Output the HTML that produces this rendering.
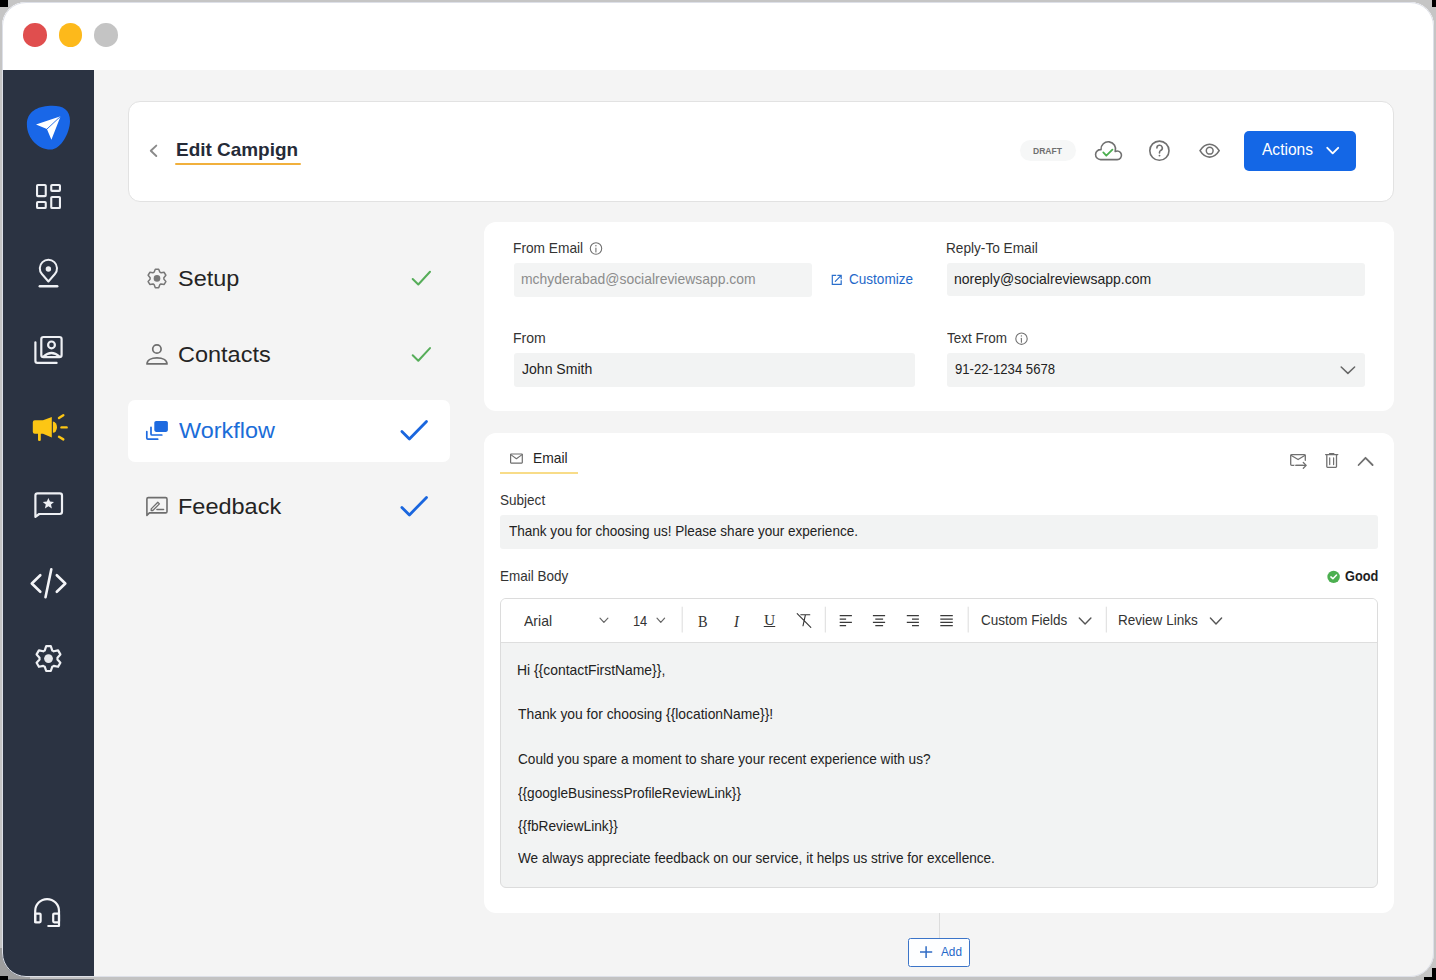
<!DOCTYPE html>
<html><head><meta charset="utf-8">
<style>
html,body{margin:0;padding:0;}
body{width:1436px;height:980px;position:relative;overflow:hidden;background:#c5c5c5;font-family:"Liberation Sans",sans-serif;}
.abs{position:absolute;}
.t{position:absolute;white-space:nowrap;transform-origin:0 0;}
#win{position:absolute;left:2px;top:2px;width:1432px;height:975px;border-radius:24px;overflow:hidden;background:#f4f4f4;}
</style></head><body>
<div class="abs" style="left:0;top:0;width:8px;height:7px;background:#000"></div>
<div class="abs" style="left:1432px;top:0;width:4px;height:7px;background:#000"></div>
<div class="abs" style="left:0;top:977px;width:1436px;height:3px;background:#c2c2c2"></div>
<div class="abs" style="left:0;top:948px;width:30px;height:32px;background:#9e9e9e"></div>
<div class="abs" style="left:8px;top:978.5px;width:86px;height:1.5px;background:#70747c"></div>
<div class="abs" style="left:0;top:976px;width:8px;height:4px;background:#000"></div>
<div class="abs" style="left:1424px;top:977px;width:12px;height:3px;background:#000"></div>
<div class="abs" style="left:1432px;top:968px;width:4px;height:12px;background:#000"></div>
<div id="win">
 <div class="abs" style="left:0;top:0;width:1432px;height:68px;background:#fff"></div>
 <div class="abs" style="left:0;top:68px;width:92px;height:907px;background:#2b3342"></div>
</div>
<!-- traffic lights -->
<div class="abs" style="left:23.3px;top:23.3px;width:23.5px;height:23.5px;border-radius:50%;background:#e04e4e"></div>
<div class="abs" style="left:58.7px;top:23.3px;width:23.5px;height:23.5px;border-radius:50%;background:#fdb91b"></div>
<div class="abs" style="left:94.2px;top:23.3px;width:23.5px;height:23.5px;border-radius:50%;background:#c4c4c4"></div>
<!-- header card -->
<div class="abs" style="left:127.5px;top:101.2px;width:1266px;height:100.5px;box-sizing:border-box;border:1.8px solid #e2e2e2;border-radius:12px;background:#fff"></div>
<div class="abs" style="left:175px;top:162.8px;width:126px;height:2.6px;background:#f1b03c;border-radius:1px"></div>
<div class="abs" style="left:1020px;top:139.6px;width:56px;height:21.8px;border-radius:11px;background:#f6f7f7"></div>
<div class="abs" style="left:1243.5px;top:131px;width:112.5px;height:39.7px;border-radius:5px;background:#1467e6"></div>
<!-- workflow highlight -->
<div class="abs" style="left:128.2px;top:400.2px;width:321.5px;height:61.4px;border-radius:7px;background:#fff"></div>
<!-- form card -->
<div class="abs" style="left:484px;top:221.8px;width:910px;height:189.2px;border-radius:12px;background:#fff"></div>
<div class="abs" style="left:513.5px;top:262.8px;width:298.5px;height:34px;border-radius:3px;background:#f3f4f4"></div>
<div class="abs" style="left:513.5px;top:353px;width:401.5px;height:33.8px;border-radius:3px;background:#f2f3f3"></div>
<div class="abs" style="left:946.8px;top:262.8px;width:418px;height:33.6px;border-radius:3px;background:#f2f3f3"></div>
<div class="abs" style="left:946.8px;top:353px;width:418px;height:34px;border-radius:3px;background:#f2f3f3"></div>
<!-- email card -->
<div class="abs" style="left:484px;top:432.8px;width:910px;height:480px;border-radius:12px;background:#fff"></div>
<div class="abs" style="left:500px;top:471.5px;width:77.7px;height:2.6px;background:#f8dc88"></div>
<div class="abs" style="left:500px;top:514.8px;width:878px;height:34px;border-radius:3px;background:#f2f3f3"></div>
<div class="abs" style="left:500px;top:597.8px;width:877.5px;height:290.2px;box-sizing:border-box;border:1px solid #dcdcdc;border-radius:6px;background:#f2f3f3;overflow:hidden">
  <div class="abs" style="left:0;top:0;width:100%;height:43.6px;background:#fff;border-bottom:1px solid #dedede"></div>
</div>
<div class="abs" style="left:938.7px;top:913px;width:1px;height:25px;background:#dcdcdc"></div>
<div class="abs" style="left:908.3px;top:938.2px;width:61.5px;height:28.5px;box-sizing:border-box;border:1.3px solid #3b74c8;border-radius:2.5px;background:#fdfeff"></div>
<svg class="abs" style="left:0;top:0" width="1436" height="980" viewBox="0 0 1436 980" fill="none" stroke-linecap="round" stroke-linejoin="round">
<!-- logo blob -->
<path d="M50,105.8 C62,105.2 70.2,109 70,121 C69.8,133 61,149.5 50.5,149.6 C39,149.7 27,139 26.9,124.5 C26.8,112 37,106.4 50,105.8 Z" fill="#1967e8"/>
<path d="M60.6,116.3 L36,124.6 L46.9,129.1 L51.4,139.7 Z" fill="#fff"/>
<path d="M60.6,116.3 L46.9,129.1" stroke="#1967e8" stroke-width="0.9"/>
<!-- dashboard -->
<g stroke="#eef0f4" stroke-width="2.1">
<rect x="37.05" y="185.05" width="8.7" height="11.1" rx="0.8"/>
<rect x="51.25" y="185.05" width="8.7" height="5.8" rx="0.8"/>
<rect x="37.05" y="201.95" width="8.7" height="6" rx="0.8"/>
<rect x="51.25" y="197.05" width="8.7" height="10.9" rx="0.8"/>
</g>
<!-- location -->
<g stroke="#eef0f4" stroke-width="2">
<path d="M48.4,281.5 L41.9,274 A8.6,8.6 0 1 1 54.9,274 Z"/>
<path d="M39.8,286.2 H57.2" stroke-width="2.5"/>
</g>
<circle cx="48.4" cy="269" r="2.7" fill="#eef0f4"/>
<!-- contacts book -->
<g stroke="#eef0f4" stroke-width="2.2">
<rect x="41.3" y="337" width="20.3" height="20.1" rx="2.2"/>
<path d="M35.4,342.3 V361 Q35.4,362.9 37.3,362.9 H56.6"/>
<circle cx="51.5" cy="344.9" r="3.4"/>
<path d="M43.5,356.5 Q51.5,349.5 59.4,356.5"/>
</g>
<!-- megaphone -->
<g fill="#fdc614">
<path d="M32.8,422.3 Q32.8,420.3 34.8,420.3 H43 L51.8,417 V437.5 L43,433.7 H34.8 Q32.8,433.7 32.8,431.7 Z"/>
<path d="M52.9,421.6 A4.1,5.6 0 0 1 52.9,432.8 Z"/>
<rect x="38" y="432" width="2.8" height="9" rx="1.2"/>
</g>
<g stroke="#fdc614" stroke-width="2.4">
<path d="M59,418 L63.3,415.2"/><path d="M61.5,427.4 H66.6"/><path d="M59,436.8 L63.3,439.4"/>
</g>
<!-- review bubble -->
<g stroke="#eef0f4" stroke-width="2.2">
<path d="M35.4,516.8 V495.5 Q35.4,493.3 37.6,493.3 H59.8 Q62,493.3 62,495.5 V511.8 Q62,514 59.8,514 H39.2 Z"/>
</g>
<path d="M48.4,497.9 L50,501.6 L54,501.9 L51,504.5 L51.9,508.4 L48.4,506.3 L44.9,508.4 L45.8,504.5 L42.8,501.9 L46.8,501.6 Z" fill="#eef0f4"/>
<!-- code -->
<g stroke="#f4f5f8" stroke-width="2.6">
<path d="M40.3,575.2 L31.8,583.5 L40.3,591.8"/>
<path d="M56.8,575.2 L65.3,583.5 L56.8,591.8"/>
<path d="M51.3,569.3 L45.5,597.2"/>
</g>
<!-- settings gear -->
<path id="gearp" d="M44.80,650.40 L46.20,646.21 L50.80,646.21 L52.20,650.40 A9.0,9.0 0 0 1 53.76,651.29 L58.08,650.41 L60.38,654.40 L57.46,657.70 A9.0,9.0 0 0 1 57.46,659.50 L60.38,662.80 L58.08,666.79 L53.76,665.91 A9.0,9.0 0 0 1 52.20,666.80 L50.80,670.99 L46.20,670.99 L44.80,666.80 A9.0,9.0 0 0 1 43.24,665.91 L38.92,666.79 L36.62,662.80 L39.54,659.50 A9.0,9.0 0 0 1 39.54,657.70 L36.62,654.40 L38.92,650.41 L43.24,651.29 A9.0,9.0 0 0 1 44.80,650.40Z" stroke="#eef0f4" stroke-width="2.2"/>
<circle cx="48.5" cy="658.6" r="4.4" fill="#e6e8ec"/>
<!-- headset -->
<g stroke="#f4f5f8" stroke-width="2.2">
<path d="M35.2,922.3 V911 A11.9,11.9 0 0 1 59,911 V925.8 Q59,926 58.8,926 H48.3"/>
<rect x="35.2" y="913.6" width="5.4" height="8.7" rx="1"/>
<rect x="53.2" y="913.6" width="5.8" height="8.7" rx="1"/>
</g>
<!-- back chevron -->
<path d="M156.3,145.6 L150.8,150.8 L156.3,156" stroke="#8a8a8a" stroke-width="1.9"/>
<!-- cloud -->
<path d="M1100.6,159.6 A5,5 0 1 1 1101.02,149.62 A7.3,7.3 0 1 1 1115.19,151.48 A4.3,4.3 0 1 1 1117.2,159.6 Z" stroke="#707070" stroke-width="1.6"/>
<path d="M1103.3,152.4 L1106.3,155.7 L1112.4,149.6" stroke="#4caf50" stroke-width="1.8"/>
<!-- help -->
<circle cx="1159.4" cy="150.7" r="9.6" stroke="#707070" stroke-width="1.6"/>
<path d="M1156.9,148 A2.7,2.7 0 1 1 1160.7,150.4 Q1159.5,151.1 1159.5,152.5 V153" stroke="#707070" stroke-width="1.6"/>
<circle cx="1159.5" cy="155.6" r="0.95" fill="#707070"/>
<!-- eye -->
<path d="M1200,150.7 C1203,145.8 1206.4,144.3 1209.6,144.3 C1212.8,144.3 1216.2,145.8 1219.2,150.7 C1216.2,155.6 1212.8,157.1 1209.6,157.1 C1206.4,157.1 1203,155.6 1200,150.7 Z" stroke="#707070" stroke-width="1.6"/>
<circle cx="1209.7" cy="150.7" r="3.4" stroke="#707070" stroke-width="1.5"/>
<!-- actions chevron -->
<path d="M1327.3,147.8 L1332.7,153.3 L1338.2,147.8" stroke="#fff" stroke-width="1.9"/>
<!-- setup gear step -->
<path d="M154.20,272.09 L155.30,269.16 L158.70,269.16 L159.80,272.09 A6.9,6.9 0 0 1 161.06,272.82 L164.16,272.31 L165.86,275.25 L163.86,277.67 A6.9,6.9 0 0 1 163.86,279.13 L165.86,281.55 L164.16,284.49 L161.06,283.98 A6.9,6.9 0 0 1 159.80,284.71 L158.70,287.64 L155.30,287.64 L154.20,284.71 A6.9,6.9 0 0 1 152.94,283.98 L149.84,284.49 L148.14,281.55 L150.14,279.13 A6.9,6.9 0 0 1 150.14,277.67 L148.14,275.25 L149.84,272.31 L152.94,272.82 A6.9,6.9 0 0 1 154.20,272.09Z" stroke="#777" stroke-width="1.5"/>
<circle cx="157" cy="278.4" r="3.3" fill="#777"/>
<!-- green checks -->
<path d="M412.7,279 L418.3,284.5 L430,271.8" stroke="#56ad59" stroke-width="2"/>
<path d="M412.7,355.3 L418.3,360.8 L430,348.1" stroke="#56ad59" stroke-width="2"/>
<!-- person -->
<circle cx="156.9" cy="349" r="4.2" stroke="#6e6e6e" stroke-width="1.7"/>
<path d="M147,363.9 H167 C167,360 162.5,357.9 157,357.9 C151.5,357.9 147,360 147,363.9 Z" stroke="#6e6e6e" stroke-width="1.7"/>
<!-- workflow icon -->
<rect x="154.3" y="421" width="13.6" height="10.9" rx="1.8" fill="#1d6ae0"/>
<path d="M151,427.3 V433.9 Q151,435 152.1,435 H161.8" stroke="#1d6ae0" stroke-width="1.7"/>
<path d="M146.8,431.5 V438.1 Q146.8,439.2 147.9,439.2 H157.7" stroke="#1d6ae0" stroke-width="1.7"/>
<!-- blue checks -->
<path d="M401.9,431.5 L409.4,439 L426.5,421.4" stroke="#1a66de" stroke-width="2.8"/>
<path d="M401.9,507.5 L409.4,515 L426.5,497.4" stroke="#1a66de" stroke-width="2.8"/>
<!-- feedback icon -->
<path d="M146.9,515.4 V499 Q146.9,497.6 148.3,497.6 H165.6 Q167,497.6 167,499 V511.5 Q167,512.9 165.6,512.9 H149.4 Z" stroke="#6e6e6e" stroke-width="1.6"/>
<path d="M151.2,508.9 L157.8,502.3 L159.4,503.9 L152.8,510.5 H151.2 Z" stroke="#6e6e6e" stroke-width="1.3"/>
<path d="M156.9,509.5 H163.6" stroke="#6e6e6e" stroke-width="1.4"/>
<!-- info icons -->
<circle cx="596" cy="248.5" r="5.7" stroke="#707070" stroke-width="1.1"/>
<path d="M595.9,248 V252" stroke="#707070" stroke-width="1.1"/>
<circle cx="595.9" cy="245.7" r="0.7" fill="#707070"/>
<circle cx="1021.5" cy="338.7" r="5.7" stroke="#707070" stroke-width="1.1"/>
<path d="M1021.4,338.2 V342.2" stroke="#707070" stroke-width="1.1"/>
<circle cx="1021.4" cy="335.9" r="0.7" fill="#707070"/>
<!-- customize icon -->
<path d="M836.2,275.3 H832.3 V284.3 H841.2 V280.3" stroke="#2b6fcc" stroke-width="1.2" stroke-linecap="butt" stroke-linejoin="miter"/>
<path d="M835.3,281.3 L841.2,275.3 M837.8,275.3 H841.2 V278.7" stroke="#2b6fcc" stroke-width="1.2"/>
<!-- select chevron -->
<path d="M1341.2,367 L1347.9,373.4 L1354.6,367" stroke="#666" stroke-width="1.5"/>
<!-- email tab icon -->
<rect x="510.6" y="454" width="11.7" height="9.1" rx="0.5" stroke="#6e6e6e" stroke-width="1.2"/>
<path d="M510.8,454.6 L516.4,458.7 L522.1,454.6" stroke="#6e6e6e" stroke-width="1.1"/>
<!-- mail forward -->
<path d="M1303,465.3 H1291.7 Q1290.7,465.3 1290.7,464.3 V455.7 Q1290.7,454.7 1291.7,454.7 H1304.3 Q1305.3,454.7 1305.3,455.7 V460.3" stroke="#707070" stroke-width="1.3"/>
<path d="M1290.9,455.2 L1298.1,459.6 L1305.1,455.2" stroke="#707070" stroke-width="1.2"/>
<path d="M1294.3,465.3 H1295.3" stroke="#fff" stroke-width="1.6" stroke-linecap="butt"/>
<path d="M1296.3,465.4 H1306 M1303.3,462.5 L1306.2,465.4 L1303.3,468.3" stroke="#707070" stroke-width="1.3"/>
<!-- trash -->
<path d="M1325.6,454.6 H1337.8 M1329.6,454.2 V453.6 H1333.8 V454.2" stroke="#707070" stroke-width="1.3"/>
<path d="M1326.8,454.8 V466.6 Q1326.8,467.3 1327.5,467.3 H1335.8 Q1336.5,467.3 1336.5,466.6 V454.8" stroke="#707070" stroke-width="1.3"/>
<path d="M1329.7,457.9 V464.6 M1333.6,457.9 V464.6" stroke="#707070" stroke-width="1.2"/>
<!-- chevron up -->
<path d="M1358.6,465 L1365.5,457.8 L1372.6,465" stroke="#707070" stroke-width="1.8"/>
<!-- good -->
<circle cx="1333.6" cy="576.9" r="6.2" fill="#4caf50"/>
<path d="M1330.9,576.9 L1332.9,578.8 L1336.5,575.1" stroke="#fff" stroke-width="1.5"/>
<!-- toolbar chevrons -->
<path d="M600,618.1 L603.9,622.3 L607.9,618.1" stroke="#666" stroke-width="1.2"/>
<path d="M657,618.1 L660.8,622.3 L664.6,618.1" stroke="#666" stroke-width="1.2"/>
<path d="M1079.3,618.1 L1085.1,624 L1090.9,618.1" stroke="#555" stroke-width="1.4"/>
<path d="M1210.4,618.1 L1216,624 L1221.6,618.1" stroke="#555" stroke-width="1.4"/>
<!-- separators -->
<path d="M682.2,606.7 V632.5 M825.3,606.7 V632.5 M968.2,606.7 V632.5 M1106.3,606.7 V632.5" stroke="#dcdcdc" stroke-width="1" stroke-linecap="butt"/>
<!-- clear format -->
<path d="M800.8,614.8 H809.8 M805.4,614.8 L803,625.8 M797.2,613.7 L810.8,627.3" stroke="#333" stroke-width="1.1"/>
<!-- underline bar -->
<path d="M764.2,626.5 H774.8" stroke="#333" stroke-width="1.1"/>
<!-- align icons -->
<g stroke="#3a3a3a" stroke-width="1.25" stroke-linecap="butt">
<path d="M839.7,615.7 H851.9 M839.7,619.1 H846.1 M839.7,622.3 H851.9 M839.7,625.5 H846.1"/>
<path d="M872.9,615.7 H885.1 M875.3,619.1 H883.1 M872.9,622.3 H885.1 M875.3,625.5 H883.1"/>
<path d="M906.8,615.7 H918.9 M912,619.1 H918.9 M906.8,622.3 H918.9 M912,625.5 H918.9"/>
<path d="M940.3,615.7 H952.8 M940.3,619.1 H952.8 M940.3,622.3 H952.8 M940.3,625.5 H952.8"/>
</g>
<!-- add plus -->
<path d="M920,952.1 H932.2 M926.1,946.2 V958.1" stroke="#2f6bc4" stroke-width="1.5" stroke-linecap="butt"/>
</svg>

<div class="abs" style="left:2px;top:2px;width:1432px;height:975px;box-sizing:border-box;border-radius:24px;border:1.7px solid #dde0e8;pointer-events:none"></div>
<span class="t" style="font-family:&quot;Liberation Sans&quot;;font-style:normal;left:175.70px;top:140.00px;font-size:19px;line-height:19px;font-weight:700;color:#252b38;transform:scaleX(0.9972)">Edit Campign</span>
<span class="t" style="font-family:&quot;Liberation Sans&quot;;font-style:normal;left:1032.90px;top:146.00px;font-size:9.8px;line-height:9.8px;font-weight:700;color:#707070;transform:scaleX(0.8702)">DRAFT</span>
<span class="t" style="font-family:&quot;Liberation Sans&quot;;font-style:normal;left:1261.80px;top:142.00px;font-size:16px;line-height:16px;font-weight:400;color:#ffffff;transform:scaleX(0.9720)">Actions</span>
<span class="t" style="font-family:&quot;Liberation Sans&quot;;font-style:normal;left:178.46px;top:268.00px;font-size:22.5px;line-height:22.5px;font-weight:400;color:#242424;transform:scaleX(1.0422)">Setup</span>
<span class="t" style="font-family:&quot;Liberation Sans&quot;;font-style:normal;left:178.36px;top:344.00px;font-size:22.5px;line-height:22.5px;font-weight:400;color:#242424;transform:scaleX(1.0441)">Contacts</span>
<span class="t" style="font-family:&quot;Liberation Sans&quot;;font-style:normal;left:179.40px;top:420.00px;font-size:22.5px;line-height:22.5px;font-weight:400;color:#1b6dd8;transform:scaleX(1.0404)">Workflow</span>
<span class="t" style="font-family:&quot;Liberation Sans&quot;;font-style:normal;left:178.36px;top:496.00px;font-size:22.5px;line-height:22.5px;font-weight:400;color:#242424;transform:scaleX(1.0440)">Feedback</span>
<span class="t" style="font-family:&quot;Liberation Sans&quot;;font-style:normal;left:512.89px;top:240.00px;font-size:15px;line-height:15px;font-weight:400;color:#333333;transform:scaleX(0.9146)">From Email</span>
<span class="t" style="font-family:&quot;Liberation Sans&quot;;font-style:normal;left:520.67px;top:271.00px;font-size:15px;line-height:15px;font-weight:400;color:#8c8c8c;transform:scaleX(0.9278)">mchyderabad@socialreviewsapp.com</span>
<span class="t" style="font-family:&quot;Liberation Sans&quot;;font-style:normal;left:849.30px;top:271.00px;font-size:15px;line-height:15px;font-weight:400;color:#1f68c9;transform:scaleX(0.9034)">Customize</span>
<span class="t" style="font-family:&quot;Liberation Sans&quot;;font-style:normal;left:512.66px;top:330.00px;font-size:15px;line-height:15px;font-weight:400;color:#333333;transform:scaleX(0.9373)">From</span>
<span class="t" style="font-family:&quot;Liberation Sans&quot;;font-style:normal;left:521.60px;top:361.00px;font-size:15px;line-height:15px;font-weight:400;color:#222222;transform:scaleX(0.9358)">John Smith</span>
<span class="t" style="font-family:&quot;Liberation Sans&quot;;font-style:normal;left:946.29px;top:240.00px;font-size:15px;line-height:15px;font-weight:400;color:#333333;transform:scaleX(0.9093)">Reply-To Email</span>
<span class="t" style="font-family:&quot;Liberation Sans&quot;;font-style:normal;left:954.07px;top:271.00px;font-size:15px;line-height:15px;font-weight:400;color:#222222;transform:scaleX(0.9339)">noreply@socialreviewsapp.com</span>
<span class="t" style="font-family:&quot;Liberation Sans&quot;;font-style:normal;left:946.80px;top:330.00px;font-size:15px;line-height:15px;font-weight:400;color:#333333;transform:scaleX(0.8991)">Text From</span>
<span class="t" style="font-family:&quot;Liberation Sans&quot;;font-style:normal;left:955.00px;top:361.00px;font-size:15px;line-height:15px;font-weight:400;color:#222222;transform:scaleX(0.8760)">91-22-1234 5678</span>
<span class="t" style="font-family:&quot;Liberation Sans&quot;;font-style:normal;left:533.28px;top:450.00px;font-size:15px;line-height:15px;font-weight:400;color:#222222;transform:scaleX(0.9233)">Email</span>
<span class="t" style="font-family:&quot;Liberation Sans&quot;;font-style:normal;left:500.00px;top:492.00px;font-size:15px;line-height:15px;font-weight:400;color:#333333;transform:scaleX(0.9024)">Subject</span>
<span class="t" style="font-family:&quot;Liberation Sans&quot;;font-style:normal;left:509.10px;top:523.00px;font-size:15px;line-height:15px;font-weight:400;color:#222222;transform:scaleX(0.9020)">Thank you for choosing us! Please share your experience.</span>
<span class="t" style="font-family:&quot;Liberation Sans&quot;;font-style:normal;left:499.90px;top:568.00px;font-size:15px;line-height:15px;font-weight:400;color:#333333;transform:scaleX(0.8996)">Email Body</span>
<span class="t" style="font-family:&quot;Liberation Sans&quot;;font-style:normal;left:1344.70px;top:569.00px;font-size:14.5px;line-height:14.5px;font-weight:700;color:#1f1f1f;transform:scaleX(0.8785)">Good</span>
<span class="t" style="font-family:&quot;Liberation Sans&quot;;font-style:normal;left:523.80px;top:613.00px;font-size:15px;line-height:15px;font-weight:400;color:#333333;transform:scaleX(0.9368)">Arial</span>
<span class="t" style="font-family:&quot;Liberation Sans&quot;;font-style:normal;left:633.35px;top:613.00px;font-size:15px;line-height:15px;font-weight:400;color:#333333;transform:scaleX(0.8538)">14</span>
<span class="t" style="font-family:&quot;Liberation Serif&quot;;font-style:normal;left:698.00px;top:613.00px;font-size:17px;line-height:17px;font-weight:400;color:#333333;transform:scaleX(0.8455)">B</span>
<span class="t" style="font-family:&quot;Liberation Serif&quot;;font-style:italic;left:733.77px;top:613.00px;font-size:17px;line-height:17px;font-weight:400;color:#333333;transform:scaleX(0.8750)">I</span>
<span class="t" style="font-family:&quot;Liberation Serif&quot;;font-style:normal;left:764.00px;top:612.00px;font-size:15.5px;line-height:15.5px;font-weight:400;color:#333333;transform:scaleX(1.0000)">U</span>
<span class="t" style="font-family:&quot;Liberation Sans&quot;;font-style:normal;left:980.60px;top:612.00px;font-size:15px;line-height:15px;font-weight:400;color:#333333;transform:scaleX(0.8998)">Custom Fields</span>
<span class="t" style="font-family:&quot;Liberation Sans&quot;;font-style:normal;left:1118.20px;top:612.00px;font-size:15px;line-height:15px;font-weight:400;color:#333333;transform:scaleX(0.9025)">Review Links</span>
<span class="t" style="font-family:&quot;Liberation Sans&quot;;font-style:normal;left:516.54px;top:663.00px;font-size:14.5px;line-height:14.5px;font-weight:400;color:#222222;transform:scaleX(0.9580)">Hi {{contactFirstName}},</span>
<span class="t" style="font-family:&quot;Liberation Sans&quot;;font-style:normal;left:517.50px;top:707.00px;font-size:14.5px;line-height:14.5px;font-weight:400;color:#222222;transform:scaleX(0.9564)">Thank you for choosing {{locationName}}!</span>
<span class="t" style="font-family:&quot;Liberation Sans&quot;;font-style:normal;left:517.50px;top:752.00px;font-size:14.5px;line-height:14.5px;font-weight:400;color:#222222;transform:scaleX(0.9392)">Could you spare a moment to share your recent experience with us?</span>
<span class="t" style="font-family:&quot;Liberation Sans&quot;;font-style:normal;left:517.50px;top:786.00px;font-size:14.5px;line-height:14.5px;font-weight:400;color:#222222;transform:scaleX(0.9408)">{{googleBusinessProfileReviewLink}}</span>
<span class="t" style="font-family:&quot;Liberation Sans&quot;;font-style:normal;left:517.50px;top:819.00px;font-size:14.5px;line-height:14.5px;font-weight:400;color:#222222;transform:scaleX(0.9455)">{{fbReviewLink}}</span>
<span class="t" style="font-family:&quot;Liberation Sans&quot;;font-style:normal;left:517.50px;top:851.00px;font-size:14.5px;line-height:14.5px;font-weight:400;color:#222222;transform:scaleX(0.9367)">We always appreciate feedback on our service, it helps us strive for excellence.</span>
<span class="t" style="font-family:&quot;Liberation Sans&quot;;font-style:normal;left:941.40px;top:946.00px;font-size:12px;line-height:12px;font-weight:400;color:#1f68c9;transform:scaleX(0.9817)">Add</span>
</body></html>
